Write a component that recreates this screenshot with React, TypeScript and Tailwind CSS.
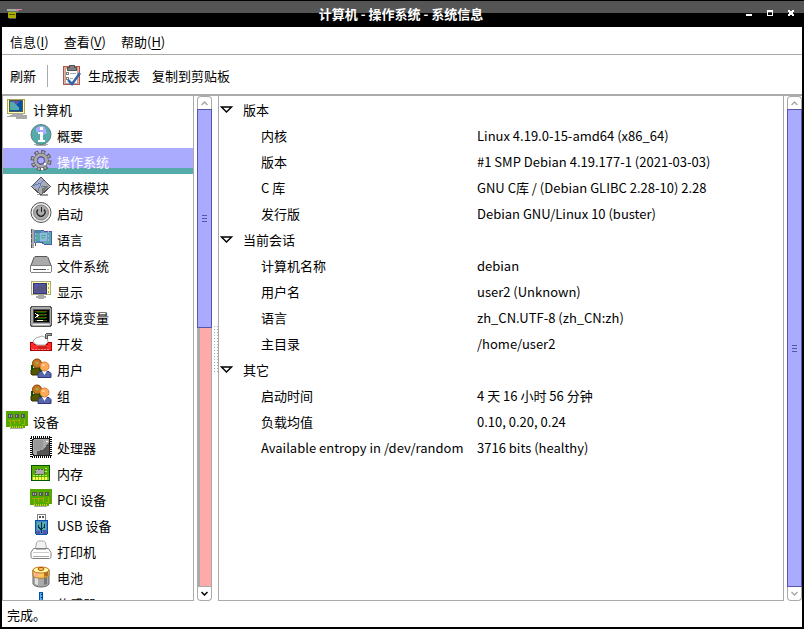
import type { ReactNode } from 'react';

interface TreeItem {
  label: string;
  icon: ReactNode;
  top?: boolean;
}

interface InfoGroup {
  title: string;
  rows: [string, string][];
}

function Icon({ children }: { children: ReactNode }) {
  return (
    <svg className="w-[22px] h-[22px] shrink-0" viewBox="0 0 22 22" shapeRendering="crispEdges" aria-hidden="true">
      {children}
    </svg>
  );
}

const computer = (
  <Icon>
    <path d="M1 1h17v14H1z" fill="#ffffaa" stroke="#aaaa55" />
    <path d="M3 2h13v11H3z" fill="#0055aa" stroke="#555" />
    <path d="M4 3h4l5 7v2H4z" fill="#55aaaa" />
    <path d="M4 3h9v1l-3 3-3-3H4z" fill="#5555aa" />
    <path d="M18 2v10" stroke="#aaaa55" strokeDasharray="2 1" />
    <path d="M6 15h11v2h3l1 1v3H10v-2H1v-1l5-1z" fill="#aaa" />
  </Icon>
);

const info = (
  <Icon>
    <ellipse cx="11" cy="20.5" rx="7" ry="1.5" fill="#aaa" />
    <circle cx="11" cy="10.5" r="10" fill="#55aaaa" stroke="#5c8080" shapeRendering="auto" />
    <path d="M6 4l4-2 5 1 2 6-5 3-2-5-4 1z" fill="#aaaaff" />
    <path d="M10 3h3v3h-3zM8 8h5v8h2v2H8v-2h2v-6H8z" fill="#fff" />
  </Icon>
);

const gear = (
  <Icon>
    <g shapeRendering="auto">
      <circle cx="11" cy="10.5" r="8.7" fill="none" stroke="#555" strokeWidth="3.6" strokeDasharray="4 2.83" />
      <circle cx="11" cy="10.5" r="8.2" fill="none" stroke="#aaa" strokeWidth="2.8" strokeDasharray="2.2 4.24" strokeDashoffset="-0.9" />
      <circle cx="11" cy="10.5" r="5.6" fill="none" stroke="#555" strokeWidth="4" />
      <circle cx="11" cy="10.5" r="5.6" fill="none" stroke="#aaa" strokeWidth="2.800" />
      <circle cx="11" cy="10.5" r="3.5" fill="#aaaaff" stroke="#5555aa" />
    </g>
    <path d="M14 13h2v2h-2zM11 18h2v2h-2z" fill="#fff" />
  </Icon>
);

const moduleIcon = (
  <Icon>
    <path d="M5 18h13v2h-7z" fill="#999" />
    <path d="M11 1l9.500 9.500L11 19 1.500 10.500z" fill="#aaa" stroke="#555" />
    <path d="M11 2l4 4-4 4-5 3-4-3z" fill="#aaaacc" />
    <path d="M2 10l9-3 3-3M11 7l-3 8M11 10l6 1" fill="none" stroke="#5580aa" />
    <path d="M12 12l6-2-6 8z" fill="#777" />
  </Icon>
);

const power = (
  <Icon>
    <circle cx="11" cy="10.500" r="10" fill="#eee" stroke="#555" shapeRendering="auto" />
    <circle cx="11" cy="10.500" r="7.500" fill="#aaa" stroke="#808080" shapeRendering="auto" />
    <path d="M8 7.500a4 4 0 1 0 6 0" fill="none" stroke="#222" strokeWidth="1.300" shapeRendering="auto" />
    <path d="M11.500 5v5" stroke="#222" />
  </Icon>
);

const flag = (
  <Icon>
    <path d="M1 1h3v19H1z" fill="#aaa" />
    <path d="M1.500 1v19M5.500 14v5" stroke="#555" strokeDasharray="4 1" />
    <path d="M4 2h7l3 1h7v13h-7l-3-2H4z" fill="#55aaaa" stroke="#5555aa" />
    <path d="M4 2h7v3H5v8h5v2H4z" fill="#5580aa" />
    <rect x="10" y="5" width="6" height="7" fill="#80c0c0" stroke="#aaaaff" />
    <path d="M11 7h5M11 9h4" stroke="#55aaaa" />
    <path d="M18 3v12M5 5v9" stroke="#aaaaff" strokeDasharray="2 2" />
  </Icon>
);

const drive = (
  <Icon>
    <path d="M5 2.500h12l1 1 3 8H1l3-8z" fill="#aaa" stroke="#555" shapeRendering="auto" />
    <path d="M.5 11.500h21v6l-1 1h-19l-1-1z" fill="#fff" stroke="#808080" />
    <path d="M3 15.500h13" stroke="#555" />
    <path d="M17 15.500h2" stroke="#aaa" />
  </Icon>
);

const display = (
  <Icon>
    <path d="M1.500 1.500h19v13h-19z" fill="#ffffaa" stroke="#aaaa80" />
    <path d="M3 3h13v10H3z" fill="#5555aa" stroke="#333380" />
    <path d="M5 11l2-4 4-2 5-1v6l-3 2H5z" fill="#555580" />
    <path d="M18.500 3v10" stroke="#aaaa55" strokeDasharray="2 2" />
    <path d="M8 15h6v1h2v2h-2v1H8v-1H6v-2h2z" fill="#aaa" />
  </Icon>
);

const terminal = (
  <Icon>
    <path d="M2 .5h18l1.500 1.500v17L20 20.500H2L.5 19V2z" fill="#aaa" stroke="#555" />
    <path d="M3 3h16v13H3z" fill="#000" stroke="#555" />
    <path d="M5 5h12M6 8h11M6 11h11M5 14h12" stroke="#555500" />
    <path d="M7 6h9M8 9h8M8 12h8" stroke="#005500" />
    <path d="M5 7l3 2.500L5 12" fill="none" stroke="#fff" />
    <path d="M7 14.500h6" stroke="#fff" />
    <path d="M3 18.500h16" stroke="#eee" />
  </Icon>
);

const development = (
  <Icon>
    <path d="M.5 10.500h4v2h13v-2h4v8H.5z" fill="#ff2a2a" stroke="#aa0000" />
    <path d="M2 17.500h18" stroke="#ff8080" strokeDasharray="2 1" />
    <path d="M8 14h9v3H8z" fill="#cc2222" />
    <path d="M3 9l3-3 6-2 5 2 1 4-3 3H7l-3-2z" fill="#fff" stroke="#aaa" shapeRendering="auto" />
    <path d="M15.500 6.500v-4l1-1h5v2h-4v3z" fill="#aaa" stroke="#555" />
  </Icon>
);

const users = (
  <Icon>
    <g shapeRendering="auto">
      <path d="M1 16v-4l3-2h6l2 3v4H2z" fill="#555500" stroke="#333300" />
      <circle cx="7" cy="5.500" r="4.500" fill="#c87820" stroke="#804000" />
      <circle cx="7" cy="5" r="1.500" fill="#aaaa55" />
      <path d="M2 7v5M10 9v4" stroke="#005500" strokeWidth="2" />
      <path d="M8 19.500v-4l2-2h9l2 2v4z" fill="#5566aa" stroke="#333380" />
      <path d="M12 13h5l-2.500 4z" fill="#fff" />
      <circle cx="14.500" cy="8.500" r="4.500" fill="#ffaa55" stroke="#d58040" />
      <path d="M12 6h3v2h-3z" fill="#ffc890" />
    </g>
  </Icon>
);

const card = (
  <Icon>
    <path d="M0 1h22v15h-3v2h-4v1H4v-2H0z" fill="#55aa00" />
    <path d="M2 4h5v4H2zM9 4h4v4H9zM15 4h4v4h-4z" fill="#555" />
    <path d="M3.500 5v2M5.500 5v2M10.500 5v2M16.500 5v2" stroke="#aaaaaa" />
    <path d="M1.500 10.500h3v6M18.500 9v5h-3M8.500 11v3M13.500 9v5M6 10.500h7" fill="none" stroke="#aaaa00" />
    <path d="M4 17h14" stroke="#c8c828" strokeWidth="2" strokeDasharray="1 1" />
    <path d="M4 18.500h13" stroke="#aaa" />
  </Icon>
);

const cpu = (
  <Icon>
    <rect x="1" y="1" width="20" height="20" fill="none" stroke="#000" strokeWidth="2" strokeDasharray="1 1" />
    <path d="M3 2h16l1 1v16l-1 1H3l-1-1V3z" fill="#222" />
    <path d="M4 3h14l1 1v14l-1 1H4l-1-1V4z" fill="#aaa" />
    <path d="M17 8l2-1v11l-1 1H7v-4l5-1 4-3z" fill="#555" />
    <path d="M4 4h9v7l-3 3H4z" fill="#999" />
    <path d="M16 5.500h2" stroke="#fff" />
  </Icon>
);

const memory = (
  <Icon>
    <path d="M1.500 3.500h18v15h-18z" fill="#88c828" stroke="#005500" />
    <path d="M2 4h17v11H2z" fill="#55aa00" />
    <path d="M5 7h9v5H5z" fill="#aaa" stroke="#555" strokeDasharray="2 1" />
    <path d="M15 6.500h3M15 9.500h3M3 13.500h14" fill="none" stroke="#aaff55" strokeDasharray="2 1" />
    <path d="M3 16.500h15" stroke="#ffff55" strokeWidth="3" strokeDasharray="2 1" />
  </Icon>
);

const usb = (
  <Icon>
    <path d="M7.500.5h8v6h-8z" fill="#fff" stroke="#808080" />
    <path d="M9 2h2v2H9zM12 2h2v2h-2z" fill="#555" />
    <path d="M5.500 6.500h12v13l-1 1h-10l-1-1z" fill="#5580c8" stroke="#0055aa" />
    <path d="M7 8h9v8H7z" fill="#55aaaa" />
    <path d="M11.500 8v11M8.500 11v2l3 3M14.500 10v3l-3 2" fill="none" stroke="#003355" />
    <path d="M6 17h4v3H6zM13 16h4v4h-4z" fill="#5555aa" />
  </Icon>
);

const printer = (
  <Icon>
    <g shapeRendering="auto">
      <path d="M5.500 8.500l1-6 2-1.500h5l2 1.500 1 6z" fill="#f2f2f2" stroke="#aaa" />
      <path d="M3.500 8.500h15l2.500 4v5l-1.500 1h-17l-1.500-1v-5z" fill="#fff" stroke="#808080" />
    </g>
    <path d="M6 9.500h10" stroke="#bbb" />
    <path d="M3 12.500h16" stroke="#ccc" />
    <path d="M3 16.500h16" stroke="#aaa" />
  </Icon>
);

const battery = (
  <Icon>
    <g shapeRendering="auto">
      <path d="M3 4v14c2 4 14 4 16 0V4z" fill="#aaa" stroke="#666" />
      <path d="M5 10h3v9l-3-1z" fill="#e0e0e0" />
      <path d="M14 10h3v8l-3 1z" fill="#777" />
      <path d="M3 4v6c3 3 13 3 16 0V4z" fill="#ffc860" stroke="#b07820" />
      <path d="M14 6l4-1v5l-4 1z" fill="#b07020" />
      <path d="M5 7h3v4l-3-1z" fill="#ffaaaa" />
      <ellipse cx="11" cy="4" rx="8" ry="3" fill="#ffffaa" stroke="#c87020" />
      <ellipse cx="11" cy="3" rx="3" ry="1.500" fill="#ffc860" stroke="#aa5500" />
    </g>
  </Icon>
);

const sensor = (
  <Icon>
    <path d="M9.500.5h3v14h-3z" fill="#55aaff" stroke="#0055aa" />
    <path d="M11 2h2M11 5h2" stroke="#003355" />
    <circle cx="11" cy="17" r="4" fill="#0055aa" />
  </Icon>
);

const treeItems: TreeItem[] = [
  { label: '计算机', icon: computer, top: true },
  { label: '概要', icon: info },
  { label: '操作系统', icon: gear },
  { label: '内核模块', icon: moduleIcon },
  { label: '启动', icon: power },
  { label: '语言', icon: flag },
  { label: '文件系统', icon: drive },
  { label: '显示', icon: display },
  { label: '环境变量', icon: terminal },
  { label: '开发', icon: development },
  { label: '用户', icon: users },
  { label: '组', icon: users },
  { label: '设备', icon: card, top: true },
  { label: '处理器', icon: cpu },
  { label: '内存', icon: memory },
  { label: 'PCI 设备', icon: card },
  { label: 'USB 设备', icon: usb },
  { label: '打印机', icon: printer },
  { label: '电池', icon: battery },
  { label: '传感器', icon: sensor },
];

const groups: InfoGroup[] = [
  {
    title: '版本',
    rows: [
      ['内核', 'Linux 4.19.0-15-amd64 (x86_64)'],
      ['版本', '#1 SMP Debian 4.19.177-1 (2021-03-03)'],
      ['C 库', 'GNU C库 / (Debian GLIBC 2.28-10) 2.28'],
      ['发行版', 'Debian GNU/Linux 10 (buster)'],
    ],
  },
  {
    title: '当前会话',
    rows: [
      ['计算机名称', 'debian'],
      ['用户名', 'user2 (Unknown)'],
      ['语言', 'zh_CN.UTF-8 (zh_CN:zh)'],
      ['主目录', '/home/user2'],
    ],
  },
  {
    title: '其它',
    rows: [
      ['启动时间', '4 天 16 小时 56 分钟'],
      ['负载均值', '0.10, 0.20, 0.24'],
      ['Available entropy in /dev/random', '3716 bits (healthy)'],
    ],
  },
];

const menus = [
  { label: '信息', accel: 'I' },
  { label: '查看', accel: 'V' },
  { label: '帮助', accel: 'H' },
];

function TitleBar() {
  return (
    <header className="flex h-[27px] shrink-0 items-center border-t border-black bg-[linear-gradient(#555_12px,#000_12px)] pl-[6px] pr-[6px] text-white">
      <svg className="w-4 h-4" viewBox="0 0 16 16" shapeRendering="crispEdges" aria-hidden="true">
        <path d="M1 3h10v2H1z" fill="#aaa" />
        <path d="M10 3h6v1h-3v1h-3z" fill="#d580aa" />
        <path d="M0 5h3v2h9V5h-1" fill="#558055" />
        <path d="M2 6h8v6H2z" fill="#aaaa00" />
        <path d="M3 8h6v1H3z" fill="#555500" />
        <path d="M3 12h7v1H3z" fill="#555" />
      </svg>
      <h1 className="flex-1 pl-[38px] text-center font-bold">计算机 - 操作系统 - 系统信息</h1>
      <div className="flex gap-[7px]">
        <button aria-label="最小化" className="w-[14px] h-4">
          <svg className="w-[14px] h-4" viewBox="0 0 14 16" shapeRendering="crispEdges">
            <path d="M4 8h6v2H4z" fill="#fff" />
          </svg>
        </button>
        <button aria-label="最大化" className="w-[14px] h-4">
          <svg className="w-[14px] h-4" viewBox="0 0 14 16" shapeRendering="crispEdges">
            <path d="M4 4h6v6H4zM5 6v3h4V6z" fill="#fff" fillRule="evenodd" />
          </svg>
        </button>
        <button aria-label="关闭" className="w-[14px] h-4">
          <svg className="w-[14px] h-4" viewBox="0 0 14 16" shapeRendering="crispEdges">
            <path d="M4 4h2v1h2V4h2v2H9v2h1v2H8V9H6v1H4V8h1V6H4z" fill="#fff" />
          </svg>
        </button>
      </div>
    </header>
  );
}

function ArrowButton({ down, active }: { down?: boolean; active?: boolean }) {
  return (
    <button
      aria-label={down ? '向下滚动' : '向上滚动'}
      className={`flex shrink-0 items-center justify-center border-[#aaa] bg-white ${
        down ? 'h-[14px] rounded-b border-x border-b' : 'h-[13px] rounded-t border-x border-t'
      } ${active ? 'text-black' : 'text-[#aaa]'}`}
    >
      <svg className="w-[7px] h-[5px]" viewBox="0 0 7 5" fill="none" stroke="currentColor" strokeWidth="1.5">
        <path d={down ? 'M.5 1l3 3 3-3' : 'M.5 4l3-3 3 3'} />
      </svg>
    </button>
  );
}

function ScrollBar({ partial }: { partial?: boolean }) {
  return (
    <div className="flex w-[15px] shrink-0 flex-col">
      <ArrowButton />
      <div className={`flex min-h-0 flex-1 flex-col ${partial ? 'border-r border-l-[3px] border-[#aaa] bg-[#ffaaaa]' : ''}`}>
        <div
          className={`flex flex-col items-center justify-center gap-[2px] border border-[#5555aa] bg-[#aaaaff] ${
            partial ? '-mr-px -ml-[3px] h-[46%]' : 'flex-1'
          }`}
        >
          <span className="h-px w-[5px] bg-[#5555aa]" />
          <span className="h-px w-[5px] bg-[#5555aa]" />
          <span className="h-px w-[5px] bg-[#5555aa]" />
        </div>
      </div>
      <div className={`flex flex-col ${partial ? 'border-t border-[#aaa]' : ''}`}>
        <ArrowButton down active={partial} />
      </div>
    </div>
  );
}

function Tree() {
  return (
    <nav className="w-[192px] shrink-0 overflow-hidden border-x border-b border-[#aaa]">
      <ul>
        {treeItems.map((item) => {
          const selected = item.label === '操作系统';
          return (
            <li key={item.label}>
              <button
                className={`flex h-[26px] w-full items-center gap-[5px] whitespace-nowrap text-left ${
                  item.top ? 'pl-[3px]' : 'pl-[27px]'
                } ${selected ? 'bg-[linear-gradient(#aaaaff_20px,#55aaaa_20px)] text-white' : ''}`}
              >
                {item.icon}
                <span className="pt-[2px]">{item.label}</span>
              </button>
            </li>
          );
        })}
      </ul>
    </nav>
  );
}

function Details() {
  return (
    <main className="min-w-0 flex-1 overflow-hidden border-x border-b border-[#aaa]">
      <table className="w-full table-fixed border-collapse text-left">
        <colgroup>
          <col className="w-[258px]" />
          <col />
        </colgroup>
        {groups.map((group) => (
          <tbody key={group.title}>
            <tr className="h-[26px]">
              <th colSpan={2} scope="rowgroup" className="p-0 font-normal">
                <button className="flex items-center gap-[10px] pl-px">
                  <svg className="w-[13px] h-[7px]" viewBox="0 0 13 7" fill="none" stroke="#000" strokeWidth="1.400">
                    <path d="M1.500 1h10l-5 5z" />
                  </svg>
                  <span className="pt-[2px]">{group.title}</span>
                </button>
              </th>
            </tr>
            {group.rows.map(([name, value]) => (
              <tr key={name} className="h-[26px]">
                <th scope="row" className="whitespace-nowrap p-0 pt-[2px] pl-[42px] font-normal">{name}</th>
                <td className="whitespace-nowrap p-0 pt-[2px]">{value}</td>
              </tr>
            ))}
          </tbody>
        ))}
      </table>
    </main>
  );
}

export default function App() {
  return (
    <div className="flex h-screen flex-col bg-black font-['Noto_Sans_CJK_SC','Noto_Sans',sans-serif] text-[13px] leading-5 text-black">
      <TitleBar />
      <div className="mx-[2px] mb-[2px] flex min-h-0 flex-1 flex-col bg-white">
        <div className="flex h-7 shrink-0 items-center gap-[15px] border-b border-[#aaa] pl-2 pt-[3px]">
          {menus.map((menu) => (
            <button key={menu.accel}>
              {menu.label}(<span className="underline underline-offset-2">{menu.accel}</span>)
            </button>
          ))}
        </div>
        <div className="flex h-[41px] shrink-0 items-center border-b-2 border-[#aaa] pl-2 pt-[2px]">
          <button>刷新</button>
          <span className="mx-[11px] h-[22px] w-px bg-[#aaa]" />
          <button className="ml-[2px] flex items-center gap-[5px]">
            <Icon>
              <path d="M2.500 1.500h16v18h-16z" fill="#ffaa80" stroke="#aa5555" />
              <path d="M4 3h12v15H4z" fill="#fff" stroke="#aaa" />
              <path d="M6 2h2V0h5v2h2v3H6z" fill="#808080" stroke="#555" />
              <path d="M5.500 7.500h2v2h-2zM5.500 12.500h2v2h-2z" fill="#fff" stroke="#808080" />
              <path d="M9 8.500h6M9 13.500h3" stroke="#aaa" />
              <path d="M7 15l4 4 8-11" fill="none" stroke="#3366aa" strokeWidth="2.500" shapeRendering="auto" />
            </Icon>
            生成报表
          </button>
          <button className="ml-3">复制到剪贴板</button>
        </div>
        <div className="flex min-h-0 flex-1">
          <Tree />
          <div className="ml-[3px] flex">
            <ScrollBar partial />
          </div>
          <div className="flex w-[6px] shrink-0 items-center justify-center">
            <div className="h-12 w-[5px] bg-[radial-gradient(#aaa_1px,transparent_1px)] bg-size-[3px_3px]" />
          </div>
          <Details />
          <div className="ml-[3px] flex">
            <ScrollBar />
          </div>
        </div>
        <footer className="flex h-[26px] shrink-0 items-center pl-[5px] pt-[2px]">完成。</footer>
      </div>
    </div>
  );
}
